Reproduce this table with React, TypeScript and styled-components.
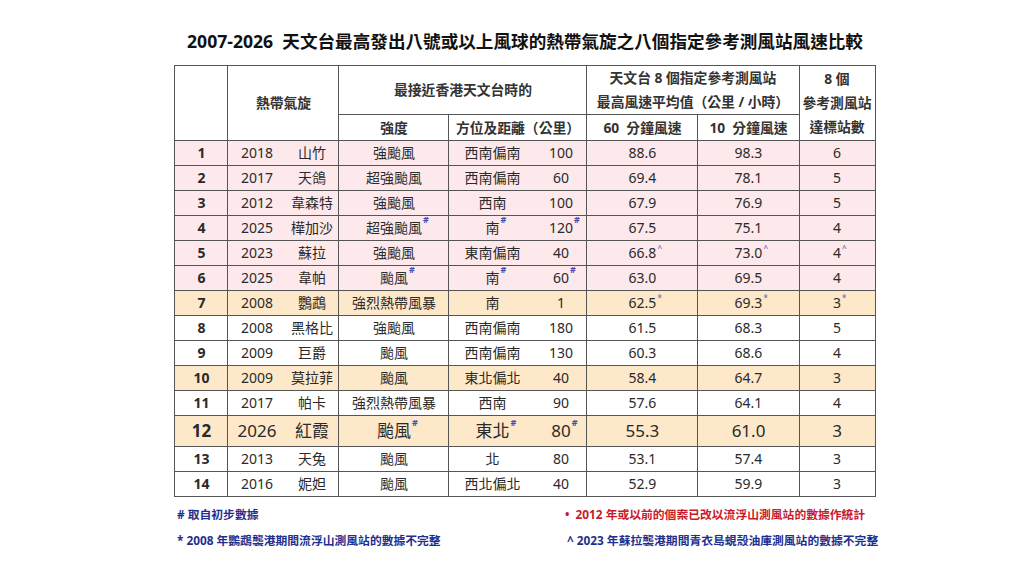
import React from 'react';
import styled, { createGlobalStyle } from 'styled-components';

const GlobalStyle = createGlobalStyle`
  html, body {
    margin: 0;
    padding: 0;
    background: #ffffff;
  }
  body {
    font-family: "Noto Sans", "Noto Sans CJK TC", sans-serif;
    color: #222;
  }
`;

const Page = styled.div`
  width: 1024px;
  height: 576px;
  display: flex;
  flex-direction: column;
  align-items: center;
  padding: 29px 0 0 26px;
  box-sizing: border-box;
`;

const Title = styled.h1`
  margin: 0 0 11px;
  font-size: 17.6px;
  line-height: 25px;
  font-weight: 700;
  color: #111;
`;

const Table = styled.table`
  width: 701px;
  table-layout: fixed;
  border-collapse: collapse;
`;

const HeadCell = styled.th<{ $tall?: boolean }>`
  border: 1px solid #555;
  background: #fff;
  font-size: 13.8px;
  font-weight: 700;
  color: #333;
  text-align: center;
  padding: 0;
  height: ${(p) => (p.$tall ? '48px' : '25px')};
  line-height: 24px;
  white-space: nowrap;
`;

type Tone = 'pink' | 'orange' | 'white';

const toneColor: Record<Tone, string> = {
  pink: '#fde8eb',
  orange: '#fde8c9',
  white: '#ffffff',
};

const Row = styled.tr<{ $tone: Tone; $big?: boolean }>`
  background: ${(p) => toneColor[p.$tone]};
  font-size: ${(p) => (p.$big ? '17px' : '14px')};
  height: ${(p) => (p.$big ? '31px' : '25px')};
`;

const Cell = styled.td<{ $bold?: boolean }>`
  border: 1px solid #555;
  padding: 0;
  text-align: center;
  font-weight: ${(p) => (p.$bold ? 700 : 400)};
  color: #2a2a2a;
  line-height: 20px;
`;

const Split = styled.div<{ $left: number }>`
  display: grid;
  grid-template-columns: ${(p) => p.$left}px 1fr;
  align-items: center;
`;

const Part = styled.span`
  text-align: center;
`;

const Marked = styled.span`
  position: relative;
  display: inline-block;
`;

const Mark = styled.span<{ $kind: '#' | '^' | '*' }>`
  position: absolute;
  left: 100%;
  top: ${(p) => (p.$kind === '#' ? '-3px' : '0px')};
  margin-left: 1px;
  font-size: ${(p) => (p.$kind === '#' ? '9px' : '8px')};
  font-weight: 700;
  line-height: 10px;
  color: ${(p) => (p.$kind === '#' ? '#4a4ab0' : '#8a78c0')};
`;

const Notes = styled.div`
  width: 700px;
  display: grid;
  grid-template-columns: 390px 1fr;
  row-gap: 13px;
  margin-top: 11px;
  font-size: 11.8px;
  line-height: 13px;
  font-weight: 700;
`;

const Note = styled.div<{ $red?: boolean }>`
  color: ${(p) => (p.$red ? '#c81a2a' : '#1f2f90')};
  padding-left: ${(p) => (p.$red ? '0' : '2px')};
  white-space: nowrap;
`;

type Val = { text: string; mark?: '#' | '^' | '*' };

type Entry = {
  rank: number;
  year: string;
  name: string;
  intensity: Val;
  dir: Val;
  dist: Val;
  m60: Val;
  m10: Val;
  count: Val;
  tone: Tone;
  big?: boolean;
};

const v = (text: string, mark?: '#' | '^' | '*'): Val => ({ text, mark });

const rows: Entry[] = [
  { rank: 1, year: '2018', name: '山竹', intensity: v('強颱風'), dir: v('西南偏南'), dist: v('100'), m60: v('88.6'), m10: v('98.3'), count: v('6'), tone: 'pink' },
  { rank: 2, year: '2017', name: '天鴿', intensity: v('超強颱風'), dir: v('西南偏南'), dist: v('60'), m60: v('69.4'), m10: v('78.1'), count: v('5'), tone: 'pink' },
  { rank: 3, year: '2012', name: '韋森特', intensity: v('強颱風'), dir: v('西南'), dist: v('100'), m60: v('67.9'), m10: v('76.9'), count: v('5'), tone: 'pink' },
  { rank: 4, year: '2025', name: '樺加沙', intensity: v('超強颱風', '#'), dir: v('南', '#'), dist: v('120', '#'), m60: v('67.5'), m10: v('75.1'), count: v('4'), tone: 'pink' },
  { rank: 5, year: '2023', name: '蘇拉', intensity: v('強颱風'), dir: v('東南偏南'), dist: v('40'), m60: v('66.8', '^'), m10: v('73.0', '^'), count: v('4', '^'), tone: 'pink' },
  { rank: 6, year: '2025', name: '韋帕', intensity: v('颱風', '#'), dir: v('南', '#'), dist: v('60', '#'), m60: v('63.0'), m10: v('69.5'), count: v('4'), tone: 'pink' },
  { rank: 7, year: '2008', name: '鸚鵡', intensity: v('強烈熱帶風暴'), dir: v('南'), dist: v('1'), m60: v('62.5', '*'), m10: v('69.3', '*'), count: v('3', '*'), tone: 'orange' },
  { rank: 8, year: '2008', name: '黑格比', intensity: v('強颱風'), dir: v('西南偏南'), dist: v('180'), m60: v('61.5'), m10: v('68.3'), count: v('5'), tone: 'white' },
  { rank: 9, year: '2009', name: '巨爵', intensity: v('颱風'), dir: v('西南偏南'), dist: v('130'), m60: v('60.3'), m10: v('68.6'), count: v('4'), tone: 'white' },
  { rank: 10, year: '2009', name: '莫拉菲', intensity: v('颱風'), dir: v('東北偏北'), dist: v('40'), m60: v('58.4'), m10: v('64.7'), count: v('3'), tone: 'orange' },
  { rank: 11, year: '2017', name: '帕卡', intensity: v('強烈熱帶風暴'), dir: v('西南'), dist: v('90'), m60: v('57.6'), m10: v('64.1'), count: v('4'), tone: 'white' },
  { rank: 12, year: '2026', name: '紅霞', intensity: v('颱風', '#'), dir: v('東北', '#'), dist: v('80', '#'), m60: v('55.3'), m10: v('61.0'), count: v('3'), tone: 'orange', big: true },
  { rank: 13, year: '2013', name: '天兔', intensity: v('颱風'), dir: v('北'), dist: v('80'), m60: v('53.1'), m10: v('57.4'), count: v('3'), tone: 'white' },
  { rank: 14, year: '2016', name: '妮妲', intensity: v('颱風'), dir: v('西北偏北'), dist: v('40'), m60: v('52.9'), m10: v('59.9'), count: v('3'), tone: 'white' },
];

function Value({ val }: { val: Val }) {
  if (!val.mark) return <>{val.text}</>;
  return (
    <Marked>
      {val.text}
      <Mark $kind={val.mark}>{val.mark}</Mark>
    </Marked>
  );
}

export default function App() {
  return (
    <>
      <GlobalStyle />
      <Page>
        <Title>2007-2026&nbsp; 天文台最高發出八號或以上風球的熱帶氣旋之八個指定參考測風站風速比較</Title>
        <Table>
          <colgroup>
            <col style={{ width: 53 }} />
            <col style={{ width: 111 }} />
            <col style={{ width: 110 }} />
            <col style={{ width: 138 }} />
            <col style={{ width: 111 }} />
            <col style={{ width: 101 }} />
            <col style={{ width: 76 }} />
          </colgroup>
          <thead>
            <tr>
              <HeadCell rowSpan={2} />
              <HeadCell rowSpan={2}>熱帶氣旋</HeadCell>
              <HeadCell colSpan={2} $tall>最接近香港天文台時的</HeadCell>
              <HeadCell colSpan={2} $tall>
                天文台 8 個指定參考測風站
                <br />
                最高風速平均值（公里 / 小時）
              </HeadCell>
              <HeadCell rowSpan={2}>
                8 個
                <br />
                參考測風站
                <br />
                達標站數
              </HeadCell>
            </tr>
            <tr>
              <HeadCell>強度</HeadCell>
              <HeadCell>方位及距離（公里）</HeadCell>
              <HeadCell>60&nbsp; 分鐘風速</HeadCell>
              <HeadCell>10&nbsp; 分鐘風速</HeadCell>
            </tr>
          </thead>
          <tbody>
            {rows.map((r) => (
              <Row key={r.rank} $tone={r.tone} $big={r.big}>
                <Cell $bold>{r.rank}</Cell>
                <Cell>
                  <Split $left={57}>
                    <Part>{r.year}</Part>
                    <Part>{r.name}</Part>
                  </Split>
                </Cell>
                <Cell>
                  <Value val={r.intensity} />
                </Cell>
                <Cell>
                  <Split $left={86}>
                    <Part>
                      <Value val={r.dir} />
                    </Part>
                    <Part>
                      <Value val={r.dist} />
                    </Part>
                  </Split>
                </Cell>
                <Cell>
                  <Value val={r.m60} />
                </Cell>
                <Cell>
                  <Value val={r.m10} />
                </Cell>
                <Cell>
                  <Value val={r.count} />
                </Cell>
              </Row>
            ))}
          </tbody>
        </Table>
        <Notes>
          <Note># 取自初步數據</Note>
          <Note $red>•&nbsp; 2012 年或以前的個案已改以流浮山測風站的數據作統計</Note>
          <Note>* 2008 年鸚鵡襲港期間流浮山測風站的數據不完整</Note>
          <Note>^ 2023 年蘇拉襲港期間青衣島蜆殼油庫測風站的數據不完整</Note>
        </Notes>
      </Page>
    </>
  );
}
